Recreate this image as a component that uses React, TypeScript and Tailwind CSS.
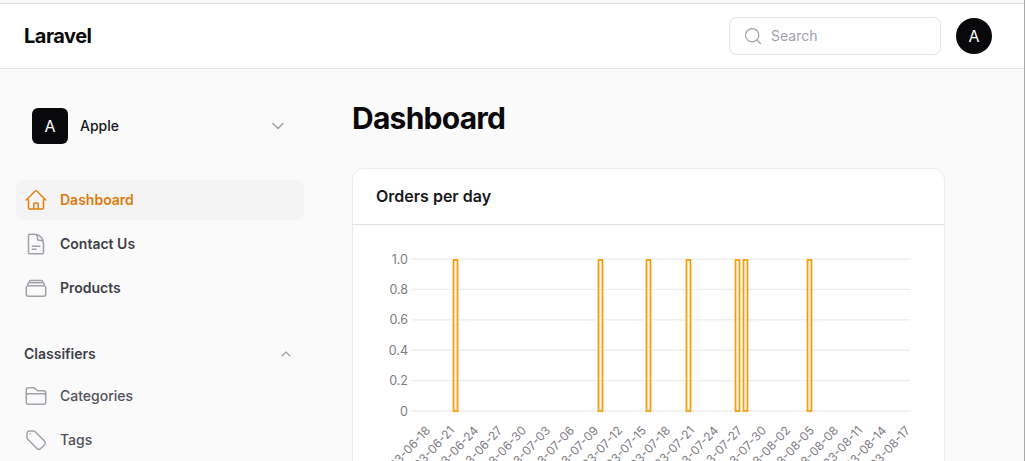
import { ChevronDown, ChevronUp, Search } from "lucide-react";
import { ReactNode } from "react";

const ticks = ["0", "0.2", "0.4", "0.6", "0.8", "1.0"];
const bars = [453, 598, 646, 686, 735, 743, 807];
const dates = [
  "2023-06-18", "2023-06-21", "2023-06-24", "2023-06-27", "2023-06-30", "2023-07-03", "2023-07-06",
  "2023-07-09", "2023-07-12", "2023-07-15", "2023-07-18", "2023-07-21", "2023-07-24", "2023-07-27",
  "2023-07-30", "2023-08-02", "2023-08-05", "2023-08-08", "2023-08-11", "2023-08-14", "2023-08-17",
];

const HomeIcon = () => (
  <svg viewBox="0 0 24 24" className="w-6 h-6 text-[#e57f0f]" fill="none" stroke="currentColor" strokeWidth={1.5} strokeLinecap="round" strokeLinejoin="round">
    <path d="M2.25 12l8.95-8.95a1.13 1.13 0 011.6 0L21.75 12M4.5 9.75v10.13c0 .62.5 1.12 1.13 1.12H9.75v-4.88c0-.62.5-1.12 1.13-1.12h2.25c.62 0 1.12.5 1.12 1.12V21h4.13c.62 0 1.12-.5 1.12-1.12V9.75M8.25 21h8.25" />
  </svg>
);

const DocIcon = () => (
  <svg viewBox="0 0 24 24" className="w-6 h-6 text-[#a1a1aa]" fill="none" stroke="currentColor" strokeWidth={1.5} strokeLinecap="round" strokeLinejoin="round">
    <path d="M19.5 14.25v-2.63a3.38 3.38 0 00-3.38-3.37h-1.5A1.13 1.13 0 0113.5 7.13v-1.5a3.38 3.38 0 00-3.38-3.38H8.25m0 12h7.5m-7.5 3H12M10.5 2.25H5.63c-.62 0-1.13.5-1.13 1.13v17.25c0 .62.5 1.12 1.13 1.12h12.75c.62 0 1.12-.5 1.12-1.12V11.25a9 9 0 00-9-9z" />
  </svg>
);

const BoxIcon = () => (
  <svg viewBox="0 0 24 24" className="w-6 h-6 text-[#a1a1aa]" fill="none" stroke="currentColor" strokeWidth={1.5} strokeLinecap="round" strokeLinejoin="round">
    <path d="M3.75 9.75h16.5M3.75 9.75A2.25 2.25 0 002.25 12v6a2.25 2.25 0 002.25 2.25h15A2.25 2.25 0 0021.75 18v-6a2.25 2.25 0 00-1.5-2.25M3.75 9.75V8.25c0-.83.67-1.5 1.5-1.5h13.5c.83 0 1.5.67 1.5 1.5v1.5M5.25 6.75V6c0-.83.67-1.5 1.5-1.5h10.5c.83 0 1.5.67 1.5 1.5v.75" />
  </svg>
);

const FolderIcon = () => (
  <svg viewBox="0 0 24 24" className="w-6 h-6 text-[#a1a1aa]" fill="none" stroke="currentColor" strokeWidth={1.5} strokeLinecap="round" strokeLinejoin="round">
    <path d="M2.25 12.75V12A2.25 2.25 0 014.5 9.75h15A2.25 2.25 0 0121.75 12v.75m-8.69-6.44l-2.12-2.12a1.5 1.5 0 00-1.06-.44H4.5A2.25 2.25 0 002.25 6v12a2.25 2.25 0 002.25 2.25h15A2.25 2.25 0 0021.75 18V9a2.25 2.25 0 00-2.25-2.25h-5.38c-.4 0-.78-.16-1.06-.44z" />
  </svg>
);

const TagIcon = () => (
  <svg viewBox="0 0 24 24" className="w-6 h-6 text-[#a1a1aa]" fill="none" stroke="currentColor" strokeWidth={1.5} strokeLinecap="round" strokeLinejoin="round">
    <path d="M9.57 3H5.25A2.25 2.25 0 003 5.25v4.32c0 .6.24 1.17.66 1.59l9.58 9.58c.7.7 1.8.87 2.62.33a18.1 18.1 0 005.22-5.22c.54-.82.37-1.92-.33-2.62L11.16 3.66A2.25 2.25 0 009.57 3z" />
    <path d="M6 6h.01v.01H6V6z" />
  </svg>
);

function NavItem({ icon, label, active, strong }: { icon: ReactNode; label: string; active?: boolean; strong?: boolean }) {
  return (
    <a className={`flex items-center gap-3 h-10 px-2 rounded-lg ${active ? "bg-[#f4f4f5]" : ""}`}>
      {icon}
      <span className={`text-sm ${active ? "font-semibold text-[#df7a0c]" : strong ? "font-semibold text-[#3f3f46]" : "font-medium text-[#52525b]"}`}>{label}</span>
    </a>
  );
}

function OrdersChart() {
  return (
    <svg viewBox="353 225 590 270" className="w-[590px] h-[270px] block" style={{ fontFamily: "Inter, sans-serif" }}>
      {ticks.map((t, i) => {
        const y = 411 - i * 30.4;
        return (
          <g key={t}>
            <line x1={411} x2={910} y1={y} y2={y} stroke="#ebebeb" strokeWidth={1.25} />
            <text x={408} y={y + 4.5} textAnchor="end" fontSize={12.5} fill="#7c7c84">{t}</text>
          </g>
        );
      })}
      {bars.map((x) => (
        <rect key={x} x={x + 0.5} y={260} width={4} height={151} fill="#fff8ec" stroke="#f59e0b" strokeWidth={1.75} />
      ))}
      {dates.map((d, i) => {
        const x = 431 + i * 24;
        return (
          <text key={d} x={x} y={431} textAnchor="end" fontSize={12} fill="#7c7c84" transform={`rotate(-47 ${x} 431)`}>{d}</text>
        );
      })}
    </svg>
  );
}

export default function App() {
  return (
    <div className="h-[461px] overflow-hidden bg-[#fafafa] border-r border-[#a8a8a8] font-['Inter',sans-serif]">
      <div className="h-[4px] bg-[#fafafa] border-b border-[#dcdcdc]" />
      <header className="h-[65px] bg-white border-b border-[#e4e4e7] flex items-center justify-between pl-6 pr-[32px]">
        <span className="text-xl font-bold tracking-tight text-[#09090b]">Laravel</span>
        <div className="flex items-center gap-[15px]">
          <div className="w-[212px] h-[38px] rounded-lg border border-[#e4e4e7] flex items-center gap-2 px-[13px]">
            <Search className="w-5 h-5 text-[#a1a1aa]" strokeWidth={1.5} />
            <span className="text-sm text-[#a1a1aa]">Search</span>
          </div>
          <div className="w-9 h-9 rounded-full bg-[#09090b] flex items-center justify-center text-white text-base">A</div>
        </div>
      </header>
      <div className="flex">
        <aside className="w-[352px] shrink-0 flex flex-col pt-[39px]">
          <div className="flex items-center ml-8 w-[256px] h-9">
            <div className="w-9 h-9 rounded-md bg-[#09090b] flex items-center justify-center text-white text-base">A</div>
            <span className="ml-3 text-sm font-medium text-[#18181b]">Apple</span>
            <ChevronDown className="ml-auto w-5 h-5 text-[#a1a1aa]" strokeWidth={1.75} />
          </div>
          <nav className="mt-9 ml-4 w-[288px] flex flex-col gap-1">
            <NavItem active icon={<HomeIcon />} label="Dashboard" />
            <NavItem strong icon={<DocIcon />} label="Contact Us" />
            <NavItem strong icon={<BoxIcon />} label="Products" />
          </nav>
          <div className="mt-[36px] ml-6 w-[270px] flex items-center justify-between h-[20px]">
            <span className="text-sm font-semibold text-[#3f3f46]">Classifiers</span>
            <ChevronUp className="w-4 h-4 text-[#a1a1aa]" strokeWidth={1.75} />
          </div>
          <nav className="mt-[12px] ml-4 w-[288px] flex flex-col gap-1">
            <NavItem icon={<FolderIcon />} label="Categories" />
            <NavItem icon={<TagIcon />} label="Tags" />
          </nav>
        </aside>
        <main className="flex-1 pt-[29px]">
          <h1 className="text-3xl font-bold tracking-tight text-[#09090b] leading-[40px]">Dashboard</h1>
          <section className="mt-[30px] w-[593px] bg-white rounded-xl border border-[#ececee]">
            <div className="h-[56px] flex items-center pl-[24px] pb-[2px] border-b border-[#e4e4e7]">
              <h2 className="text-base font-semibold text-[#18181b] -ml-[1px]">Orders per day</h2>
            </div>
            <OrdersChart />
          </section>
        </main>
      </div>
    </div>
  );
}
